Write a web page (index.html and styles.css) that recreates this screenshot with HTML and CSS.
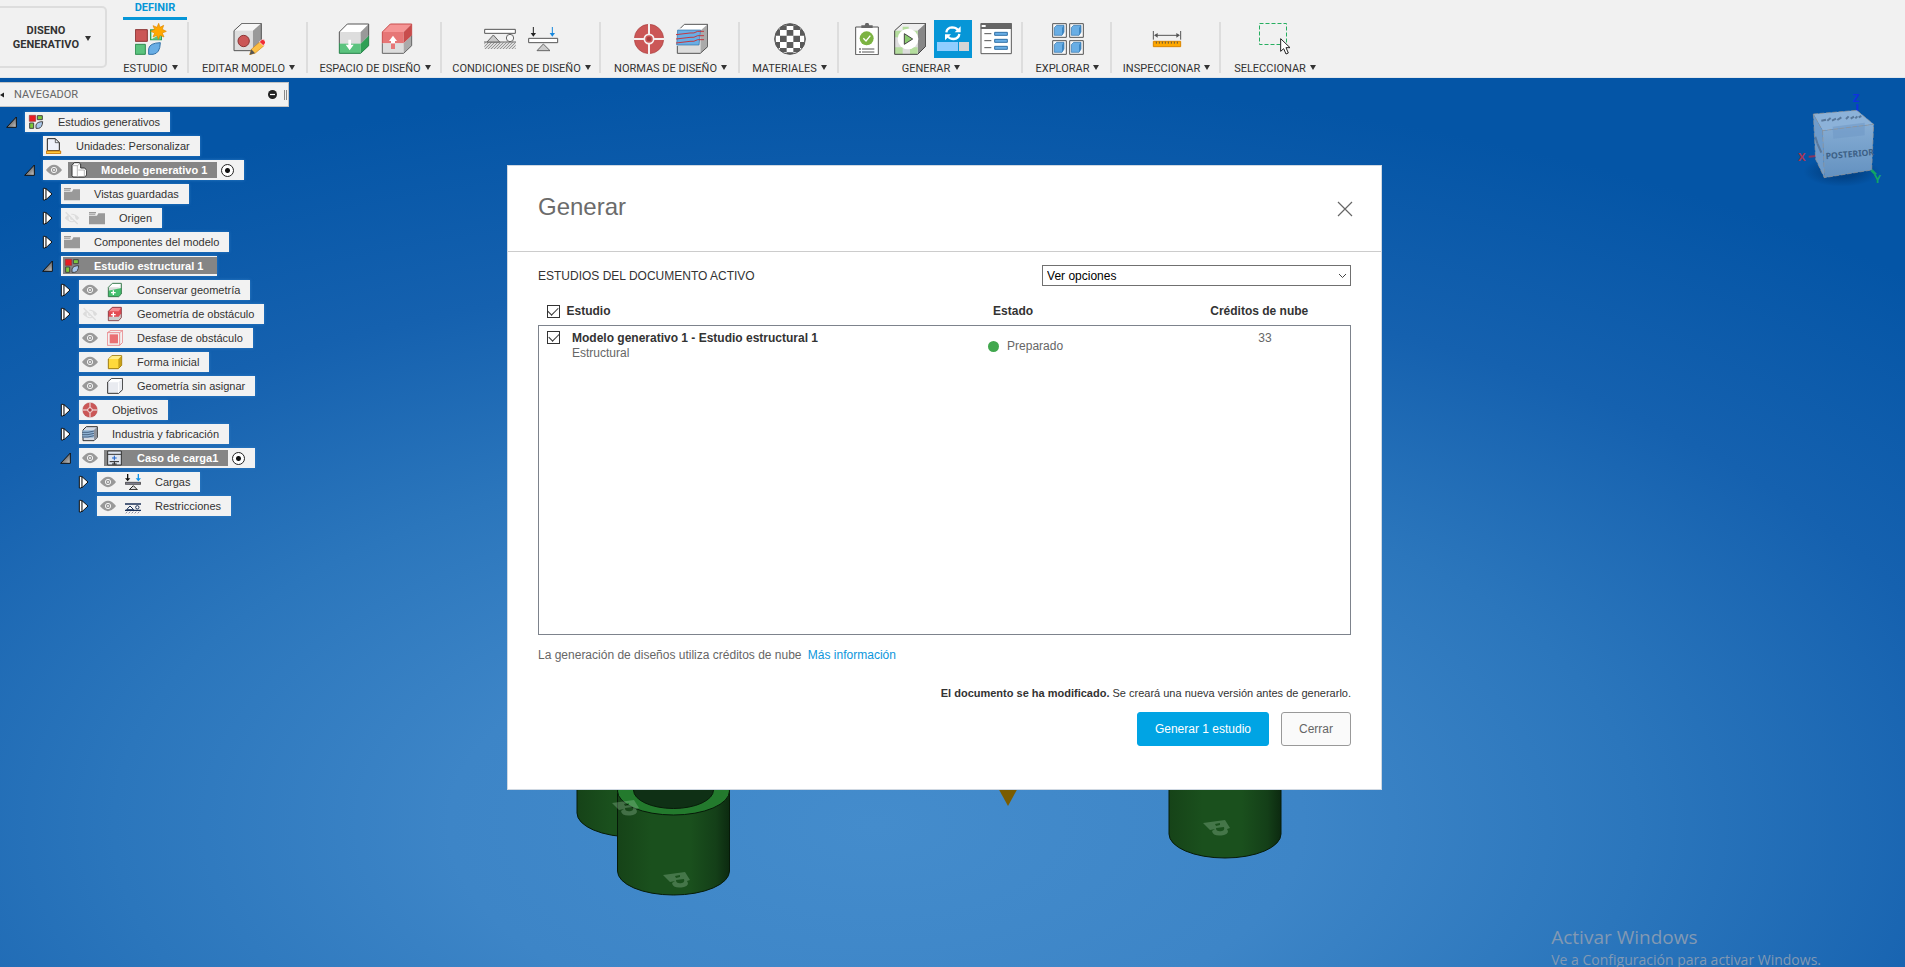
FILE: index.html
```html
<!DOCTYPE html>
<html lang="es">
<head>
<meta charset="utf-8">
<title>Diseño generativo</title>
<link rel="stylesheet" href="styles.css">
</head>
<body>
<svg class="defs" aria-hidden="true">
  <defs>
    <linearGradient id="arrowShade" x1="0" y1="0" x2="1" y2="1"><stop offset="0.3" stop-color="#555"/><stop offset="1" stop-color="#ccc"/></linearGradient>
    <linearGradient id="greenSide" x1="0" x2="1" y1="0" y2="0"><stop offset="0" stop-color="#164318"/><stop offset="0.3" stop-color="#1a501d"/><stop offset="0.65" stop-color="#1a501d"/><stop offset="0.88" stop-color="#143f18"/><stop offset="1" stop-color="#0c2a10"/></linearGradient>
    <linearGradient id="cubeFace" x1="0" x2="0" y1="0" y2="1"><stop offset="0" stop-color="#86add4"/><stop offset="1" stop-color="#6391c0"/></linearGradient>
    <radialGradient id="cubeShadow"><stop offset="0.4" stop-color="#023f80" stop-opacity="0.8"/><stop offset="1" stop-color="#023f80" stop-opacity="0"/></radialGradient>
    <pattern id="hatch" width="9" height="9" patternUnits="userSpaceOnUse"><rect width="9" height="9" fill="#ddd"/><path d="M-2 11L11-2M-2 2L2-2M7 11L11 7" stroke="#888" stroke-width="2.5"/></pattern>
    <clipPath id="ballClip"><circle cx="1080" cy="117" r="46"/></clipPath>
  </defs>
  <symbol id="collapsed" viewBox="108 312 75 60">
    <path d="M130 325h5l4 3v28l-4 4h-5z" fill="#fff" stroke="#111" stroke-width="3"/><path d="M138 326l18 16-18 17z" fill="#fff" stroke="#111" stroke-width="3"/>
  </symbol>
  <symbol id="expanded" viewBox="54 240 75 60">
    <path d="M103 255v31H74z" fill="url(#arrowShade)" stroke="#111" stroke-width="3"/>
  </symbol>
  <symbol id="eye" viewBox="138 246 48 48">
    <path d="M138 270q24-31 48 0q-24 31-48 0z" fill="#999"/><circle cx="162" cy="270" r="8" fill="#999" stroke="#f2f2f2" stroke-width="3"/><circle cx="162" cy="270" r="3" fill="#f2f2f2"/>
  </symbol>
  <symbol id="eyeoff" viewBox="192 390 48 48">
    <path d="M194 414q22-25 44 0q-22 25-44 0z" fill="#dcdcdc"/><circle cx="216" cy="414" r="8" fill="#dcdcdc" stroke="#f2f2f2" stroke-width="4"/><path d="M199 395l36 36" stroke="#f2f2f2" stroke-width="9"/><path d="M197 397l36 35" stroke="#dcdcdc" stroke-width="4"/>
  </symbol>
  <symbol id="folder" viewBox="192 318 48 48">
    <path d="M192 335h24l4-7h20v33h-48z" fill="#999"/><path d="M192 324h21v4h-21zM192 329h19v3h-19z" fill="#999"/>
  </symbol>
  <symbol id="study" viewBox="84 102 48 48">
    <path d="M88 106h19v18H88z" fill="#e81c24" stroke="#933" stroke-width="2"/><path d="M112 107h15v12h-15z" fill="#7ec83a" stroke="#444" stroke-width="3"/><path d="M89 129h12v16H89z" fill="#7ec83a" stroke="#444" stroke-width="3"/><path d="M108 145v-10q3-10 20-10q-1 18-12 20z" fill="#a9c7ea" stroke="#444" stroke-width="3"/>
  </symbol>
  <symbol id="target" viewBox="612 69 96 96">
    <circle cx="660" cy="117" r="44" fill="#cb5757" stroke="#a84040" stroke-width="2"/><path d="M660 71v92M614 117h92" stroke="#f5f0f0" stroke-width="6"/><circle cx="660" cy="117" r="14" fill="#cb5757" stroke="#f5f0f0" stroke-width="5"/><circle cx="660" cy="117" r="7" fill="#a84040"/>
  </symbol>
  <symbol id="arrow" viewBox="0 0 6 5"><path d="M0 0h6L3 5z" fill="#333"/></symbol>
</svg>

<header class="toolbar">
  <button class="workspace" type="button"><span>DISENO<br>GENERATIVO</span><svg class="caret"><use href="#arrow"/></svg></button>
  <div class="ribbon">
    <nav class="tabs"><a class="tab" href="#definir">DEFINIR</a></nav>
    <div class="groups" id="definir">
      <section class="group g-study">
        <div class="tools"><button type="button" aria-label="Nuevo estudio"><svg class="tool" viewBox="402 69 96 96">
          <path d="M403 89h36v35h-36z" fill="#cb5757" stroke="#8b3434" stroke-width="3"/><path d="M449 90h32v29h-32z" fill="#e9f7ec" stroke="#2fa055" stroke-width="4"/><path d="M449 119l30-17v17z" fill="#5bc37e"/><path d="M403 133h30v30h-30z" fill="#5bc37e" stroke="#2e8b4f" stroke-width="3"/><path d="M443 163v-17q3-17 35-18q-1 33-22 35z" fill="#69aee5" stroke="#3271a8" stroke-width="3"/><path d="M473 70l4 12 11-6-4 12 12 6-12 5 5 12-12-5-5 12-4-12-12 5 5-12-12-5 12-6-5-11 12 5z" fill="#ffa800" stroke="#e08800" stroke-width="2"/>
        </svg></button></div>
        <button class="menu" type="button">ESTUDIO<svg class="caret"><use href="#arrow"/></svg></button>
      </section>
      <section class="group g-edit">
        <div class="tools"><button type="button" aria-label="Editar modelo"><svg class="tool" viewBox="697 69 96 96">
          <path d="M700 92l24-22h58l-26 23v59h-56z" fill="#f7f7f7"/><path d="M756 93l26-23v58l-26 24z" fill="#999"/><path d="M700 92h56v60h-56z" fill="#dedede"/><path d="M700 152V92l24-22h58v50M700 152h52" fill="none" stroke="#555" stroke-width="3"/><circle cx="729" cy="123" r="17" fill="#cb5757" stroke="#8b3434" stroke-width="3"/><path d="M747 164l5-16 26-23 12 12-26 22z" fill="#fcbf45" stroke="#d48a16" stroke-width="2"/><path d="M747 164l5-16 11 12z" fill="#555"/><path d="M776 126l8-8q10-1 11 10l-7 9z" fill="#f02d35" stroke="#fff" stroke-width="2"/>
        </svg></button></div>
        <button class="menu" type="button">EDITAR MODELO<svg class="caret"><use href="#arrow"/></svg></button>
      </section>
      <section class="group g-space">
        <div class="tools"><button type="button" aria-label="Conservar geometría"><svg class="tool" viewBox="1014 69 96 96">
          <path d="M1018 96l24-24h64l-24 24z" fill="#fff"/><path d="M1018 96h64v36h-64z" fill="#ddd"/><path d="M1082 96l24-24v35l-24 24z" fill="#999"/><path d="M1018 131h64v29h-64z" fill="#5bc37e"/><path d="M1082 131l24-24v31l-24 22z" fill="#2fa055"/><path d="M1018 129V96l24-24h64v35" fill="none" stroke="#555" stroke-width="3"/><path d="M1018 129v31h64l24-23v-30" fill="none" stroke="#26834a" stroke-width="3"/><path d="M1045 119h8v15h8l-12 17-12-17h8z" fill="#fff"/>
        </svg></button><button type="button" aria-label="Geometría de obstáculo"><svg class="tool" viewBox="1143 69 96 96">
          <path d="M1147 96l24-24h64l-24 24z" fill="#f59494"/><path d="M1147 96h64v34h-64z" fill="#e67676"/><path d="M1211 96l24-24v35l-24 23z" fill="#c84c4c"/><path d="M1147 130h64v30h-64z" fill="#ddd"/><path d="M1211 130l24-23v31l-24 22z" fill="#aaa"/><path d="M1147 130V96l24-24h64v35" fill="none" stroke="#c84c4c" stroke-width="3"/><path d="M1147 130v30h64l24-23v-30" fill="none" stroke="#666" stroke-width="3"/><path d="M1173 130h12v17h-12z" fill="#e67676"/><path d="M1173 130v-7h-6l12-16 12 16h-6v7z" fill="#fff"/>
        </svg></button></div>
        <button class="menu" type="button">ESPACIO DE DISEÑO<svg class="caret"><use href="#arrow"/></svg></button>
      </section>
      <section class="group g-cond">
        <div class="tools"><button type="button" aria-label="Restricciones"><svg class="tool" viewBox="165 69 96 96">
          <path d="M167 88h92v12h-92z" fill="#fff" stroke="#555" stroke-width="3"/><path d="M166 127h94v20h-94z" fill="url(#hatch)"/><path d="M165 126h96" stroke="#666" stroke-width="3"/><path d="M174 126l19-21 19 21z" fill="#c9c9c9" stroke="#666" stroke-width="3"/><circle cx="243" cy="114" r="11" fill="#f7f7f7" stroke="#666" stroke-width="3"/>
        </svg></button><button type="button" aria-label="Cargas"><svg class="tool" viewBox="294 69 96 96">
          <path d="M299 115h87v13h-87z" fill="#fff" stroke="#555" stroke-width="3"/><path d="M324 152l19-20 20 20z" fill="#ccc" stroke="#666" stroke-width="3"/><path d="M313 81v22" stroke="#222" stroke-width="3"/><path d="M305 99h16l-8 11z" fill="#222"/><path d="M370 81v22" stroke="#1687dd" stroke-width="3"/><path d="M362 99h16l-8 11z" fill="#1687dd"/>
        </svg></button></div>
        <button class="menu" type="button">CONDICIONES DE DISEÑO<svg class="caret"><use href="#arrow"/></svg></button>
      </section>
      <section class="group g-rules">
        <div class="tools"><button type="button" aria-label="Objetivos"><svg class="tool"><use href="#target"/></svg></button><button type="button" aria-label="Fabricación"><svg class="tool" viewBox="741 69 96 96">
          <path d="M746 92l20-19h70l-22 19z" fill="#fff"/><path d="M814 92l22-19v68l-22 19z" fill="#aaa"/><path d="M745 92h69v68h-69z" fill="#ddd"/><path d="M814 160l22-20V73h-70l-12 12M745 138v22h69" fill="none" stroke="#555" stroke-width="3"/><path d="M746 90h69l-5 45h-67z" fill="#69aee5" stroke="#3271a8" stroke-width="2"/><path d="M741 104l42-5q12 2 23-5h19M741 117l42-5q12 2 23-5h19M741 129l42-5q12 2 23-5h19" fill="none" stroke="#c33840" stroke-width="3"/>
        </svg></button></div>
        <button class="menu" type="button">NORMAS DE DISEÑO<svg class="caret"><use href="#arrow"/></svg></button>
      </section>
      <section class="group g-mat">
        <div class="tools"><button type="button" aria-label="Materiales"><svg class="tool" viewBox="1032 69 96 96">
          <circle cx="1080" cy="117" r="46" fill="#fff"/><g clip-path="url(#ballClip)" fill="#5a5a5a"><path d="M1070 66h20v12h-20zM1050 76h20v14h-20zM1090 76h20v14h-20zM1070 90h20v17h-20zM1037 88h13v19h-13zM1110 88h13v19h-13zM1050 107h20v19h-20zM1090 107h20v19h-20zM1030 107h7v19h-7zM1123 107h7v19h-7zM1070 126h20v18h-20zM1037 126h13v18h-13zM1110 126h13v18h-13zM1050 144h20v13h-20zM1090 144h20v13h-20zM1070 157h20v10h-20z"/></g><circle cx="1080" cy="117" r="46" fill="none" stroke="#555" stroke-width="3"/>
        </svg></button></div>
        <button class="menu" type="button">MATERIALES<svg class="caret"><use href="#arrow"/></svg></button>
      </section>
      <section class="group g-gen">
        <div class="tools"><button type="button" aria-label="Comprobación previa"><svg class="tool" viewBox="66 69 96 96">
          <path d="M80 81h68v83H80z" fill="#fff" stroke="#555" stroke-width="3"/><path d="M97 76h10l3-7h8l3 7h10v8H97z" fill="#666"/><circle cx="113" cy="115" r="21" fill="#7cb342"/><path d="M103 115l8 8 13-16" fill="none" stroke="#fff" stroke-width="4"/><path d="M91 147h4M91 156h4" stroke="#333" stroke-width="4"/><path d="M99 147h37M99 156h37" stroke="#555" stroke-width="3"/>
        </svg></button><button type="button" aria-label="Vista preliminar"><svg class="tool" viewBox="192 69 96 96">
          <path d="M194 92l24-22h69l-24 22z" fill="#eee"/><path d="M263 92l24-22v69l-24 24z" fill="#888"/><path d="M194 92h69v71h-69z" fill="#ddd"/><path d="M194 92h22v20h-22zM240 92h23v20h-23zM194 142h24v21h-24zM240 142h23v21h-23zM218 80h18v10h-18z" fill="#b5dd9e"/><path d="M194 163V92l24-22h69v69l-24 24z" fill="none" stroke="#444" stroke-width="3"/><circle cx="234" cy="117" r="31" fill="#fff"/><path d="M223 101v32l25-16z" fill="#8bcb70" stroke="#444" stroke-width="3"/>
        </svg></button><button class="active" type="button" aria-label="Generar"><svg class="tool" viewBox="321 69 96 96">
          <path d="M321 126h63v27h-63z" fill="#8fceff"/><path d="M387 126h30v27h-30z" fill="#d5d5d5"/><path d="M349 97q2-14 17-15q12 0 18 8M388 102q-2 14-17 15q-12 0-18-8" fill="none" stroke="#fff" stroke-width="7"/><path d="M392 79v18h-18zM345 121v-18h18z" fill="#fff"/>
        </svg></button><button type="button" aria-label="Estado del trabajo"><svg class="tool" viewBox="448 69 96 96">
          <path d="M451 71h91v90h-91z" fill="#fff" stroke="#5a5a5a" stroke-width="3"/><path d="M450 69h93v18h-93z" fill="#666"/><path d="M453 75h12v6h-12z" fill="#fff"/><path d="M461 101h21M461 122h21M461 143h21" stroke="#555" stroke-width="3"/><path d="M492 97h38v9h-38zM492 118h38v9h-38zM492 139h38v9h-38z" fill="#69aee5" stroke="#3271a8" stroke-width="3"/>
        </svg></button></div>
        <button class="menu" type="button">GENERAR<svg class="caret"><use href="#arrow"/></svg></button>
      </section>
      <section class="group g-explore">
        <div class="tools"><button type="button" aria-label="Explorar"><svg class="tool" viewBox="663 69 96 96">
          <g id="cell"><path d="M665 71h41v41h-41z" fill="#f8f8f8" stroke="#555" stroke-width="3"/><path d="M670 83l7-7h22v20l-6 10h-23z" fill="#69aee5" stroke="#3271a8" stroke-width="2"/><path d="M693 83l6-7v20l-6 10z" fill="#3d86c2"/></g><use href="#cell" x="51"/><use href="#cell" y="51"/><use href="#cell" x="51" y="51"/>
        </svg></button></div>
        <button class="menu" type="button">EXPLORAR<svg class="caret"><use href="#arrow"/></svg></button>
      </section>
      <section class="group g-inspect">
        <div class="tools"><button type="button" aria-label="Medir"><svg class="tool" viewBox="960 69 96 96">
          <path d="M967 93v26M1049 93v26M972 106h72" stroke="#555" stroke-width="3"/><path d="M969 106l11-7v14zM1047 106l-11-7v14z" fill="#555"/><path d="M967 124h82v16h-82z" fill="#ffa800" stroke="#d98500" stroke-width="3"/><path d="M976 125v6M985 125v6M994 125v6M1003 125v6M1012 125v6M1021 125v6M1030 125v6M1039 125v6" stroke="#444" stroke-width="2.5"/>
        </svg></button></div>
        <button class="menu" type="button">INSPECCIONAR<svg class="caret"><use href="#arrow"/></svg></button>
      </section>
      <section class="group g-select">
        <div class="tools"><button type="button" aria-label="Seleccionar"><svg class="tool" viewBox="1287 69 96 96">
          <path d="M1288.500 70.500h81v63h-81z" fill="none" stroke="#27ae60" stroke-width="3" stroke-dasharray="12 6"/><path d="M1352 116v38l9-8 7 16 7-3-7-16h12z" fill="#fff" stroke="#222" stroke-width="3"/>
        </svg></button></div>
        <button class="menu" type="button">SELECCIONAR<svg class="caret"><use href="#arrow"/></svg></button>
      </section>
    </div>
  </div>
</header>

<main class="viewport">
  <svg class="scene" viewBox="0 78 1905 889" preserveAspectRatio="xMidYMid slice" aria-hidden="true">
    <g stroke="#061a08" stroke-width="1">
      <path d="M577 760v53a56 24 0 0 0 112 0v-53z" fill="url(#greenSide)"/>
      <path d="M617.500 791v80a56 24 0 0 0 112 0v-80z" fill="url(#greenSide)"/>
      <ellipse cx="673.500" cy="791" rx="56" ry="24" fill="#237a2d"/>
      <ellipse cx="673.500" cy="790" rx="40" ry="18.500" fill="#0f3015"/>
      <path d="M1169 760v74a56 24 0 0 0 112 0v-74z" fill="url(#greenSide)"/>
    </g>
    <g id="lock" fill="#a9cfae" fill-opacity="0.3" fill-rule="evenodd">
      <path d="M663 875l22-3 5 8-3 1q3 4-3 6-11 2-12-4l3-2-5 1zM675 876l1 2 4-1v-2zM676 880q0 4 6 3 3-1 2-4z"/>
    </g>
    <use href="#lock" x="-51" y="-72"/>
    <use href="#lock" x="540" y="-52"/>
    <path d="M997 786h22l-11 20z" fill="#7a5c00"/>
  </svg>

  <aside class="browser">
    <div class="browser-head">
      <svg class="fold" viewBox="0 0 5 6"><path d="M5 0v6L0 3z" fill="#222"/></svg>
      <h2>NAVEGADOR</h2>
      <button type="button" aria-label="Contraer"><svg viewBox="0 0 9 9"><circle cx="4.500" cy="4.500" r="4.500" fill="#222"/><path d="M2 4.500h5" stroke="#fff" stroke-width="1.200"/></svg></button>
      <span class="grip"></span>
    </div>
    <ul class="tree">
      <li class="lv0"><button class="twist" type="button" aria-label="Contraer"><svg><use href="#expanded"/></svg></button><div class="node"><svg class="ic"><use href="#study"/></svg><span class="name">Estudios generativos</span></div></li>
      <li class="lv1"><span class="twist"></span><div class="node"><svg class="ic" viewBox="138 174 48 48"><path d="M142 212v-36h24l12 12v24z" fill="#eef1fa" stroke="#222" stroke-width="3"/><path d="M166 176v12h12" fill="none" stroke="#222" stroke-width="2"/><path d="M139 213h43v8h-43z" fill="#ffc93d" stroke="#c9780a" stroke-width="3"/></svg><span class="name">Unidades: Personalizar</span></div></li>
      <li class="lv1"><button class="twist" type="button" aria-label="Contraer"><svg><use href="#expanded"/></svg></button><div class="node"><svg class="eye"><use href="#eye"/></svg><span class="marked"><svg class="ic" viewBox="213 246 48 48"><path d="M216 287v-31l7-8h14l5 4v12h12l6 7v14l-6 6h-18l-3 0h-14z" fill="#fff" stroke="#333" stroke-width="3"/><path d="M218 257h14v31M235 270h18v20M232 257l8-6M254 270l5-3" fill="none" stroke="#999" stroke-width="2"/></svg><span class="name">Modelo generativo 1</span></span><input class="pick" type="radio" name="modelo" checked aria-label="Activar Modelo generativo 1"></div></li>
      <li class="lv2"><button class="twist" type="button" aria-label="Expandir"><svg><use href="#collapsed"/></svg></button><div class="node"><svg class="ic"><use href="#folder"/></svg><span class="name">Vistas guardadas</span></div></li>
      <li class="lv2"><button class="twist" type="button" aria-label="Expandir"><svg><use href="#collapsed"/></svg></button><div class="node"><svg class="eye"><use href="#eyeoff"/></svg><svg class="ic"><use href="#folder"/></svg><span class="name">Origen</span></div></li>
      <li class="lv2"><button class="twist" type="button" aria-label="Expandir"><svg><use href="#collapsed"/></svg></button><div class="node"><svg class="ic"><use href="#folder"/></svg><span class="name">Componentes del modelo</span></div></li>
      <li class="lv2"><button class="twist" type="button" aria-label="Contraer"><svg><use href="#expanded"/></svg></button><div class="node selected"><svg class="ic"><use href="#study"/></svg><span class="name">Estudio estructural 1</span></div></li>
      <li class="lv3"><button class="twist" type="button" aria-label="Expandir"><svg><use href="#collapsed"/></svg></button><div class="node"><svg class="eye"><use href="#eye"/></svg><svg class="ic" viewBox="321 606 48 48"><path d="M325 622l12-12h27l-8 12z" fill="#fff"/><path d="M325 622h31v28h-31z" fill="#ddd"/><path d="M325 632l39-8v18l-8 8h-31z" fill="#43bf6d"/><path d="M325 650v-28l12-12h27v32l-8 8z" fill="none" stroke="#397a4e" stroke-width="3"/><path d="M340 631v14M333 638h14" stroke="#fff" stroke-width="4"/></svg><span class="name">Conservar geometría</span></div></li>
      <li class="lv3"><button class="twist" type="button" aria-label="Expandir"><svg><use href="#collapsed"/></svg></button><div class="node"><svg class="eye"><use href="#eyeoff"/></svg><svg class="ic" viewBox="321 18 48 48"><path d="M325 34l12-12h27v31l-8 9h-31z" fill="#ccc"/><path d="M325 34l12-12h27v18l-8 10h-31z" fill="#e34b53"/><path d="M325 34h31l8-12h-27z" fill="#f58b90"/><path d="M325 62V34l12-12h27v31l-8 9z" fill="none" stroke="#803338" stroke-width="2.500"/><path d="M340 37v14M333 44h14" stroke="#fff" stroke-width="4"/></svg><span class="name">Geometría de obstáculo</span></div></li>
      <li class="lv3"><span class="twist"></span><div class="node"><svg class="eye"><use href="#eye"/></svg><svg class="ic" viewBox="321 90 48 48"><path d="M329 103h25v27h-25z" fill="#ea7073"/><path d="M322 98h37v38h-37zM322 98l11-7h35v36l-9 9M359 98l9-7" fill="none" stroke="#ea8f92" stroke-width="3"/></svg><span class="name">Desfase de obstáculo</span></div></li>
      <li class="lv3"><span class="twist"></span><div class="node"><svg class="eye"><use href="#eye"/></svg><svg class="ic" viewBox="321 162 48 48"><path d="M325 177l11-10h29v29l-10 10h-30z" fill="#ffd93b" stroke="#9d7b12" stroke-width="3"/><path d="M355 177l9-9v28l-9 9z" fill="#c9a118"/><path d="M326 177h29l9-9h-28z" fill="#ffec88"/></svg><span class="name">Forma inicial</span></div></li>
      <li class="lv3"><span class="twist"></span><div class="node"><svg class="eye"><use href="#eye"/></svg><svg class="ic" viewBox="321 234 48 48"><path d="M323 246l11-10h34v33l-12 11h-33z" fill="#e9ebf0" stroke="#333" stroke-width="3"/><path d="M324 247h31l12-10h-32z" fill="#fff"/><path d="M356 247v32" stroke="#fff" stroke-width="3"/></svg><span class="name">Geometría sin asignar</span></div></li>
      <li class="lv3"><button class="twist" type="button" aria-label="Expandir"><svg><use href="#collapsed"/></svg></button><div class="node"><svg class="ic"><use href="#target"/></svg><span class="name">Objetivos</span></div></li>
      <li class="lv3"><button class="twist" type="button" aria-label="Expandir"><svg><use href="#collapsed"/></svg></button><div class="node"><svg class="ic" viewBox="246 378 48 48"><path d="M249 390l10-10h33v32l-10 10h-33z" fill="#d5dae3" stroke="#333" stroke-width="3"/><path d="M282 390l9-9v31l-9 9z" fill="#8d929b"/><path d="M248 391h33v22h-33z" fill="#8fb2d3"/><path d="M246 397h18l18-4M246 404h18l18-4M246 411h18l18-4" fill="none" stroke="#4a6585" stroke-width="3"/></svg><span class="name">Industria y fabricación</span></div></li>
      <li class="lv3"><button class="twist" type="button" aria-label="Contraer"><svg><use href="#expanded"/></svg></button><div class="node"><svg class="eye"><use href="#eye"/></svg><span class="marked"><svg class="ic" viewBox="321 450 48 48"><path d="M323 453h41v42h-41z" fill="#dfe5ee" stroke="#333" stroke-width="3"/><path d="M323 463h41" stroke="#333" stroke-width="3"/><path d="M343 467v14M336 474h14" stroke="#1b60c8" stroke-width="3"/><path d="M329 485h28M343 486v7M336 492h14" stroke="#222" stroke-width="3"/></svg><span class="name">Caso de carga1</span></span><input class="pick" type="radio" name="caso" checked aria-label="Activar Caso de carga1"></div></li>
      <li class="lv4"><button class="twist" type="button" aria-label="Expandir"><svg><use href="#collapsed"/></svg></button><div class="node"><svg class="eye"><use href="#eye"/></svg><svg class="ic" viewBox="375 522 48 48"><path d="M376 547h46v6h-46z" fill="#889" stroke="#222" stroke-width="2"/><path d="M388 569l12-12 12 12z" fill="#ddd" stroke="#222" stroke-width="3"/><path d="M383 522v16" stroke="#111" stroke-width="4"/><path d="M375 535h16l-8 9z" fill="#111"/><path d="M415 522v16" stroke="#1092e8" stroke-width="4"/><path d="M407 535h16l-8 9z" fill="#1092e8"/></svg><span class="name">Cargas</span></div></li>
      <li class="lv4"><button class="twist" type="button" aria-label="Expandir"><svg><use href="#collapsed"/></svg></button><div class="node"><svg class="eye"><use href="#eye"/></svg><svg class="ic" viewBox="375 594 48 48"><path d="M375 612h48M375 631h48" stroke="#1b3157" stroke-width="4"/><path d="M380 629l10-11 11 11z" fill="#fff" stroke="#1b3157" stroke-width="3"/><circle cx="412" cy="622" r="5" fill="#fff" stroke="#1b3157" stroke-width="3"/><path d="M377 640l5-5M386 640l5-5M395 640l5-5M404 640l5-5M413 640l5-5" stroke="#557" stroke-width="2"/></svg><span class="name">Restricciones</span></div></li>
    </ul>
  </aside>

  <svg class="viewcube" viewBox="0 0 375 360" role="img" aria-label="Vista posterior">
    <ellipse cx="185" cy="275" rx="115" ry="45" fill="url(#cubeShadow)"/>
    <path d="M232 72v24" stroke="#1030e0" stroke-width="6"/><path d="M86 230l24-2" stroke="#8a3560" stroke-width="6"/><path d="M274 270l14 14" stroke="#12a565" stroke-width="8"/>
    <path d="M100 102l130-11 51 42-153 19z" fill="#8cb2d9"/><path d="M100 102l28 50 5 141-26-55z" fill="#6f9ccb"/><path d="M128 152l153-19-6 137-142 23z" fill="url(#cubeFace)"/><path d="M158 140l96-12v38l-94 10z" fill="#7099c6" fill-opacity="0.6"/>
    <path d="M100 102l130-11 51 42-153 19zM128 152l5 141M100 102l7 136 26 55 142-23 6-137" fill="none" stroke="#9a9593" stroke-width="2" stroke-dasharray="14 5"/>
    <text class="cube-text" x="138" y="238" transform="rotate(-5 138 238)">POSTERIOR</text>
    <path d="M124 122l14-3M142 122l10-8M156 122l12-6M172 120l12-8M198 117l8-8M212 116l10-6M226 115l6-6M236 112l8-4M106 170l6 20M112 190l6 14M118 204l6 14" stroke="#59789b" stroke-width="6"/>
    <g class="axis"><text x="219" y="66" fill="#1030e0">Z</text><text x="54" y="243" fill="#a83555">X</text><text x="282" y="310" fill="#12a565">Y</text></g>
  </svg>

  <div class="watermark"><p class="wm-title">Activar Windows</p><p class="wm-text">Ve a Configuración para activar Windows.</p></div>

  <div class="overlay">
    <section class="dialog" role="dialog" aria-labelledby="dlg-title">
      <header class="dialog-head">
        <h1 id="dlg-title">Generar</h1>
        <button class="close" type="button" aria-label="Cerrar diálogo"><svg viewBox="0 0 16 16"><path d="M1 1l14 14M15 1L1 15" stroke="#666" stroke-width="1.200"/></svg></button>
      </header>
      <div class="dialog-body">
        <div class="filter">
          <label for="options">ESTUDIOS DEL DOCUMENTO ACTIVO</label>
          <div class="select"><select id="options"><option>Ver opciones</option></select><svg viewBox="0 0 9 6"><path d="M1 1l3.500 3.500L8 1" fill="none" stroke="#444"/></svg></div>
        </div>
        <table class="studies">
          <colgroup><col class="c-study"><col class="c-state"><col class="c-credits"></colgroup>
          <thead><tr>
            <th><label class="check-all"><input class="check" type="checkbox" checked>Estudio</label></th>
            <th class="state-head">Estado</th>
            <th class="credits">Créditos de nube</th>
          </tr></thead>
          <tbody><tr>
            <td><label class="study"><input class="check" type="checkbox" checked><span><strong>Modelo generativo 1 - Estudio estructural 1</strong><br><span class="kind">Estructural</span></span></label></td>
            <td><span class="state">Preparado</span></td>
            <td class="credits">33</td>
          </tr></tbody>
        </table>
        <p class="note">La generación de diseños utiliza créditos de nube <a href="#info">Más información</a></p>
        <p class="warning"><strong>El documento se ha modificado.</strong> Se creará una nueva versión antes de generarlo.</p>
        <div class="actions"><button class="primary" type="button">Generar 1 estudio</button><button class="secondary" type="button">Cerrar</button></div>
      </div>
    </section>
  </div>
</main>
</body>
</html>
```
FILE: styles.css
```css
* { box-sizing: border-box; }
html, body { height: 100%; }
body {
  margin: 0;
  display: flex;
  flex-direction: column;
  overflow: hidden;
  font-family: "Liberation Sans", Arial, sans-serif;
  font-size: 12px;
  color: #333;
}
h1, h2, p, ul { margin: 0; padding: 0; font-weight: normal; }
button { border: 0; padding: 0; background: none; font: inherit; color: inherit; }
svg { display: block; }
.defs { position: absolute; width: 0; height: 0; }

/* Toolbar */
.toolbar {
  display: flex;
  flex: none;
  background: #f1f1f1;
  border-bottom: 1px solid #e0e6ec;
  font-family: Roboto, "Liberation Sans", sans-serif;
  font-size: 11px;
}
.workspace {
  display: flex;
  align-items: center;
  justify-content: flex-end;
  gap: 6px;
  width: 107px;
  height: 62px;
  margin: 6px 5px 0 0;
  padding: 2px 14px 0 0;
  border: 2px solid #ddd;
  border-left: 0;
  border-radius: 0 5px 5px 0;
  font-weight: bold;
  line-height: 14px;
}
.caret { width: 6px; height: 5px; flex: none; }
.ribbon { flex: 1; }
.tabs { display: flex; height: 20px; padding-left: 11px; }
.tab {
  width: 64px;
  border-bottom: 3px solid #0696d7;
  color: #0696d7;
  font-weight: bold;
  line-height: 15px;
  text-align: center;
  text-decoration: none;
}
.groups { display: flex; }
.group { position: relative; height: 57px; flex: none; }
.group:not(:last-child)::after {
  content: "";
  position: absolute;
  right: 0;
  top: 2px;
  width: 2px;
  height: 51px;
  background: #ddd;
}
.g-study { width: 77px; }
.g-edit { width: 119px; }
.g-space { width: 134px; }
.g-cond { width: 159px; }
.g-rules { width: 139px; }
.g-mat { width: 99px; }
.g-gen { width: 184px; }
.g-explore { width: 89px; }
.g-inspect { width: 109px; }
.g-select { width: 108px; }
.tools { display: flex; justify-content: center; gap: 5px; }
.tools button { display: grid; place-items: center; width: 38px; height: 38px; }
.tools .active { background: #0696d7; }
.tool { width: 32px; height: 32px; }
.menu {
  display: flex;
  align-items: center;
  justify-content: center;
  gap: 4px;
  width: 100%;
  height: 19px;
  padding-top: 2px;
  white-space: nowrap;
}
.menu .caret { margin-bottom: 2px; }

/* Canvas */
.viewport {
  position: relative;
  flex: 1;
  overflow: hidden;
  background: radial-gradient(ellipse 80% 84% at 46% 84%, #448ccc 0%, #3d85c7 28%, #2b76bc 50%, #1561af 74%, #0455a6 100%);
}
.scene { position: absolute; inset: 0; width: 100%; height: 100%; }
.viewcube { position: absolute; top: 2px; right: 0; width: 125px; height: 120px; }
.cube-text { font: bold 26px "Noto Sans", sans-serif; fill: #3d6187; }
.axis { font: bold 34px "Open Sans", sans-serif; }
.watermark {
  position: absolute;
  right: 84px;
  bottom: -3px;
  color: #8299b3;
  font-family: "Open Sans", "Noto Sans", sans-serif;
}
.wm-title { font-size: 19px; line-height: 26px; }
.wm-text { font-size: 14px; line-height: 20px; }

/* Browser tree */
.browser { position: relative; width: 289px; padding-top: 4px; font-size: 11px; }
.browser-head {
  display: flex;
  align-items: center;
  height: 25px;
  background: #f2f2f2;
  border: 1px solid #c4c4c4;
  border-left: 0;
  font-family: Roboto, sans-serif;
}
.fold { width: 4px; height: 6px; margin-right: 10px; }
.browser-head h2 { flex: 1; font-size: 11px; color: #666; }
.browser-head button svg { width: 9px; height: 9px; }
.grip { width: 3px; height: 10px; margin: 0 1px 0 7px; border: solid #888; border-width: 0 1px; }
.tree { display: grid; gap: 4px; padding-top: 5px; list-style: none; }
.tree li { display: flex; height: 20px; }
.lv1 { padding-left: 18px; }
.lv2 { padding-left: 36px; }
.lv3 { padding-left: 54px; }
.lv4 { padding-left: 72px; }
.twist, .twist svg { width: 25px; height: 20px; flex: none; }
.node {
  display: flex;
  align-items: center;
  padding: 0 10px 0 3px;
  background: #f2f2f2;
  box-shadow: 0 0 3px #2f7cc4;
  white-space: nowrap;
}
.ic { width: 16px; height: 16px; margin-right: 14px; flex: none; }
.eye { width: 16px; height: 16px; margin-right: 9px; flex: none; }
.marked {
  display: flex;
  align-items: center;
  height: 16px;
  margin-left: -3px;
  padding: 0 10px 0 3px;
  background: #858585;
  color: #fff;
  font-weight: bold;
}
.selected {
  background: #858585;
  border: solid #f2f2f2;
  border-width: 1px 0 2px 2px;
  padding-left: 1px;
  padding-right: 14px;
  color: #fff;
  font-weight: bold;
}
.pick {
  appearance: none;
  width: 13px;
  height: 13px;
  margin: 0 0 0 4px;
  border: 1px solid #222;
  border-radius: 50%;
  background: radial-gradient(circle, #111 0 2px, #fff 3px);
}

/* Dialog */
.overlay {
  position: absolute;
  inset: 87px 0 auto;
  display: grid;
  grid-template-columns: 507fr 875fr 523fr;
}
.dialog { grid-column: 2; background: #fff; border: 1px solid #cfd8e2; }
.dialog-head {
  display: flex;
  align-items: center;
  justify-content: space-between;
  height: 86px;
  padding: 0 28px 4px 30px;
  border-bottom: 1px solid #ccc;
}
.dialog-head h1 { font-size: 24px; color: #6b6b6b; }
.close { padding-top: 4px; }
.close svg { width: 16px; height: 16px; }
.dialog-body { padding: 13px 30px 43px; }
.filter { display: flex; align-items: center; justify-content: space-between; }
.select { position: relative; width: 38%; }
.select select {
  appearance: none;
  display: block;
  width: 100%;
  height: 21px;
  padding: 0 4px;
  border: 1px solid #707070;
  border-radius: 0;
  background: #fff;
  color: #000;
  font: inherit;
}
.select svg { position: absolute; right: 4px; top: 8px; width: 9px; height: 6px; pointer-events: none; }
.studies { width: 100%; margin-top: 12px; border-collapse: collapse; table-layout: fixed; }
.c-study { width: 55%; }
.c-state { width: 24%; }
.c-credits { width: 21%; }
.studies th { height: 27px; padding: 0; text-align: left; vertical-align: middle; }
.studies td { height: 309px; padding: 5px 0 0; vertical-align: top; line-height: 15px; color: #666; }
.studies tbody { border: 1px solid #7d838c; }
.studies .credits { text-align: center; }
.studies th.credits { padding-right: 12px; }
.studies .state-head { padding-left: 8px; }
.check-all { display: flex; align-items: center; gap: 7px; padding-left: 8px; }
.study { display: flex; align-items: flex-start; gap: 12px; padding-left: 8px; }
.study strong { color: #333; }
.check {
  appearance: none;
  display: grid;
  place-items: center;
  width: 13px;
  height: 13px;
  margin: 0;
  border: 1px solid #333;
  background: #fff;
}
.check:checked::before {
  content: "";
  width: 9px;
  height: 5px;
  margin-bottom: 3px;
  border: solid #333;
  border-width: 0 0 1px 1px;
  transform: rotate(-45deg);
}
.state { display: flex; align-items: center; gap: 8px; padding: 8px 0 0 3px; }
.state::before { content: ""; width: 11px; height: 11px; border-radius: 50%; background: #41a74e; }
.note { margin-top: 12px; line-height: 16px; color: #666; }
.note a { margin-left: 3px; color: #0d96dc; text-decoration: none; }
.warning { margin-top: 23px; font-size: 11px; line-height: 14px; text-align: right; }
.actions { display: flex; justify-content: flex-end; gap: 12px; margin-top: 12px; }
.actions button { height: 34px; padding: 0 17px; border: 1px solid #00a4e4; border-radius: 3px; }
.actions .primary { background: #00a4e4; color: #fff; }
.actions .secondary { background: #fafafa; border-color: #999; color: #666; }
```
